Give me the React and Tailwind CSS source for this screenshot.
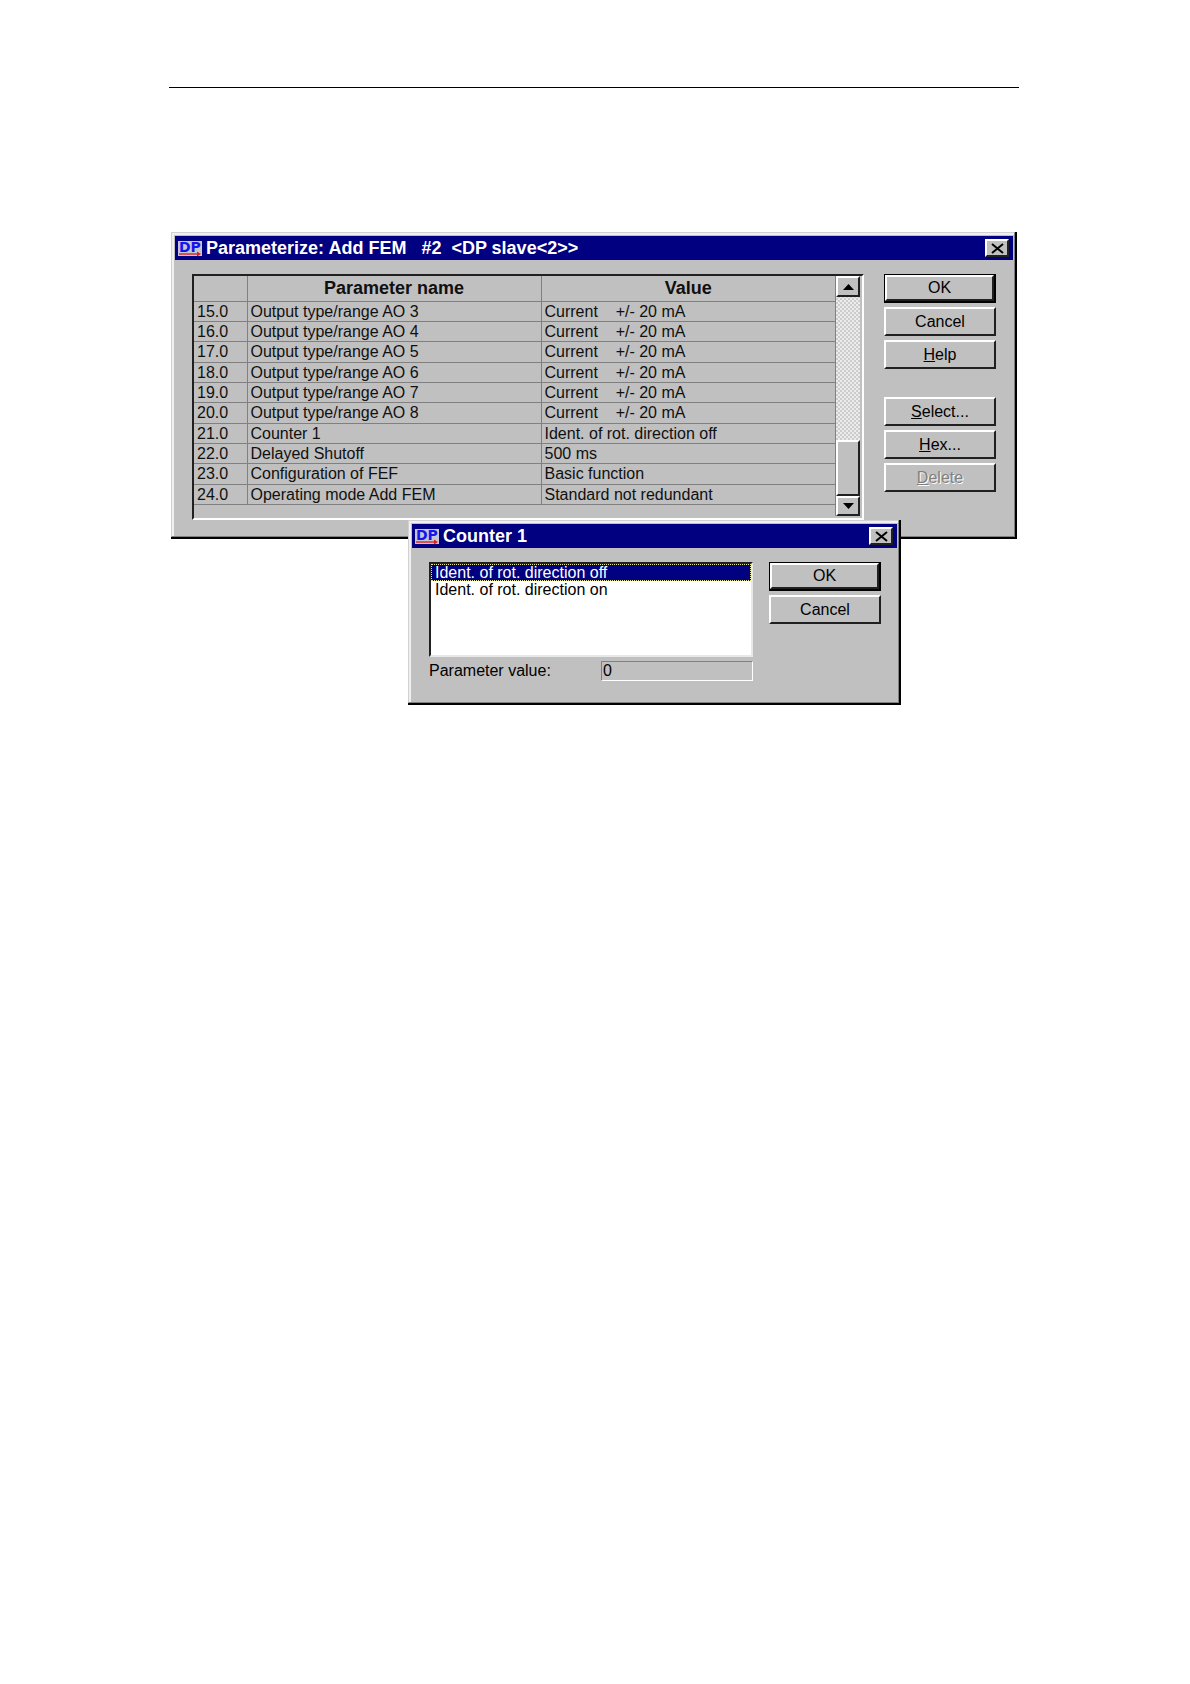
import React, { useState } from 'react';

const rows = [
  ['15.0', 'Output type/range AO 3', 'Current    +/- 20 mA'],
  ['16.0', 'Output type/range AO 4', 'Current    +/- 20 mA'],
  ['17.0', 'Output type/range AO 5', 'Current    +/- 20 mA'],
  ['18.0', 'Output type/range AO 6', 'Current    +/- 20 mA'],
  ['19.0', 'Output type/range AO 7', 'Current    +/- 20 mA'],
  ['20.0', 'Output type/range AO 8', 'Current    +/- 20 mA'],
  ['21.0', 'Counter 1', 'Ident. of rot. direction off'],
  ['22.0', 'Delayed Shutoff', '500 ms'],
  ['23.0', 'Configuration of FEF', 'Basic function'],
  ['24.0', 'Operating mode Add FEM', 'Standard not redundant'],
];

const options = ['Ident. of rot. direction off', 'Ident. of rot. direction on'];

const raised = 'border-2 border-t-white border-l-white border-r-[#202020] border-b-[#202020] bg-[#c0c0c0]';

function DpIcon() {
  return (
    <svg width="24" height="17" viewBox="0 0 24 17" className="shrink-0 overflow-visible" aria-hidden="true">
      <rect y="1" width="24" height="15" fill="#c6c6d2" />
      <text x="1" y="12" fontFamily="DejaVu Sans, sans-serif" fontWeight="bold" fontSize="14" fill="#1414f0">DP</text>
      <path d="M1 14H20" fill="none" stroke="#e02020" strokeWidth="1.4" />
      <path d="M19 11.5L23 14L19 16.5Z" fill="#e02020" />
    </svg>
  );
}

function Dialog({ title, children }) {
  return (
    <section aria-label={title} className="border-r-2 border-b-2 border-black bg-[#c0c0c0]">
      <div className="border border-t-[#d0d0d0] border-l-[#d0d0d0] border-r-[#808080] border-b-[#808080]">
        <div className="border-t-2 border-l-2 border-[#f0f0f0] p-px">
          <div className="flex h-6 items-center gap-1 bg-[#000080] pr-1 pl-[3px]">
            <DpIcon />
            <h2 className="flex-1 text-lg leading-6 font-bold whitespace-pre text-white">{title}</h2>
            <button aria-label="Close" className={`flex h-[18px] w-6 items-center justify-center ${raised}`}>
              <svg width="13" height="11" viewBox="0 0 13 11" aria-hidden="true">
                <path d="M1 1L12 10M12 1L1 10" stroke="#000" strokeWidth="2" />
              </svg>
            </button>
          </div>
          {children}
        </div>
      </div>
    </section>
  );
}

function PushButton({ children, isDefault, disabled }) {
  return (
    <button
      disabled={disabled}
      className={`h-[29px] w-28 text-base leading-5 ${isDefault ? 'border border-r-2 border-b-2 border-black' : ''} ${disabled ? 'text-[#808080] [text-shadow:1px_1px_0_#fff]' : ''}`}
    >
      <span className={`flex h-full items-center justify-center ${raised}`}>
        <span>{children}</span>
      </span>
    </button>
  );
}

function ScrollBar() {
  return (
    <div className="flex w-6 shrink-0 flex-col bg-[repeating-conic-gradient(#cccccc_0_25%,#ececec_0_50%)] bg-[length:4px_4px]">
      <button aria-label="Scroll up" className={`flex h-[21px] items-center justify-center ${raised}`}>
        <svg width="11" height="6" viewBox="0 0 11 6" aria-hidden="true"><path d="M0 6L5.5 0L11 6Z" /></svg>
      </button>
      <div className="flex-1" />
      <div className={`h-14 ${raised}`} />
      <button aria-label="Scroll down" className={`flex h-5 items-center justify-center ${raised}`}>
        <svg width="11" height="6" viewBox="0 0 11 6" aria-hidden="true"><path d="M0 0L5.5 6L11 0Z" /></svg>
      </button>
    </div>
  );
}

function ParameterTable() {
  return (
    <div className="flex h-[246px] flex-1 border-2 border-t-[#202020] border-l-[#202020] border-r-white border-b-white pr-0.5 pb-0.5">
      <div className="flex-1 border-r border-[#808080]">
        <table className="h-[229px] w-full table-fixed border-collapse text-base leading-[19px] text-[#101010]">
          <thead>
            <tr className="h-[25px] border-b border-[#808080]">
              <th className="w-[53px] border-r border-[#808080]" />
              <th className="border-r border-[#808080] p-0 text-lg leading-6">Parameter name</th>
              <th className="p-0 text-lg leading-6">Value</th>
            </tr>
          </thead>
          <tbody>
            {rows.map(([id, name, value]) => (
              <tr key={id} className="border-b border-[#808080]">
                <td className="border-r border-[#808080] p-0 pl-[3px]">{id}</td>
                <td className="border-r border-[#808080] p-0 pl-[3px]">{name}</td>
                <td className="p-0 pl-[3px] whitespace-pre">{value}</td>
              </tr>
            ))}
          </tbody>
        </table>
      </div>
      <ScrollBar />
    </div>
  );
}

function App() {
  const [selected, setSelected] = useState(0);

  return (
    <main className="min-h-screen bg-white px-[169px] pt-[87px] font-['Liberation_Sans',Arial,sans-serif] text-black">
      <hr className="mr-0.5 border-t border-black" />

      <div className="relative mt-36 mr-1 ml-0.5">
        <Dialog title="Parameterize: Add FEM   #2  <DP slave<2>>">
          <div className="flex items-start gap-5 pt-[14px] pr-[17px] pb-[15px] pl-[17px]">
            <ParameterTable />
            <div className="flex flex-col gap-1">
              <PushButton isDefault>OK</PushButton>
              <PushButton>Cancel</PushButton>
              <PushButton><u>H</u>elp</PushButton>
              <div className="mt-6 flex flex-col gap-1">
                <PushButton><u>S</u>elect...</PushButton>
                <PushButton><u>H</u>ex...</PushButton>
                <PushButton disabled><u>D</u>elete</PushButton>
              </div>
            </div>
          </div>
        </Dialog>

        {/* value picker, floats over the parameter window */}
        <div className="absolute top-72 left-[237px] w-[493px]">
          <Dialog title="Counter 1">
            <div className="flex items-start gap-4 pt-[14px] pr-4 pb-5 pl-[17px]">
              <div className="flex-1">
                <select
                  size={5}
                  aria-label="Counter 1"
                  value={selected}
                  onChange={(e) => setSelected(Number(e.target.value))}
                  className="block h-[95px] w-full appearance-none overflow-hidden border-2 border-t-[#202020] border-l-[#202020] border-r-[#e8e8e8] border-b-[#e8e8e8] bg-white p-0 text-base leading-4 outline-none"
                >
                  {options.map((option, i) => (
                    <option
                      key={option}
                      value={i}
                      className="h-[17px] min-h-0 p-0 pl-1 leading-[17px] checked:bg-[#000080] checked:bg-[linear-gradient(#000080,#000080)] checked:text-white checked:outline-1 checked:-outline-offset-1 checked:outline-dotted checked:outline-[#e8e8a0]"
                    >
                      {option}
                    </option>
                  ))}
                </select>
                <div className="mt-1 flex items-center justify-between">
                  <label htmlFor="value" className="text-base leading-5">Parameter value:</label>
                  <input
                    id="value"
                    readOnly
                    value={selected}
                    className="h-5 w-[152px] border border-t-[#808080] border-l-[#808080] border-r-white border-b-white px-px text-base leading-4 outline-none"
                  />
                </div>
              </div>
              <div className="flex flex-col gap-1">
                <PushButton isDefault>OK</PushButton>
                <PushButton>Cancel</PushButton>
              </div>
            </div>
          </Dialog>
        </div>
      </div>
    </main>
  );
}

export default App;
